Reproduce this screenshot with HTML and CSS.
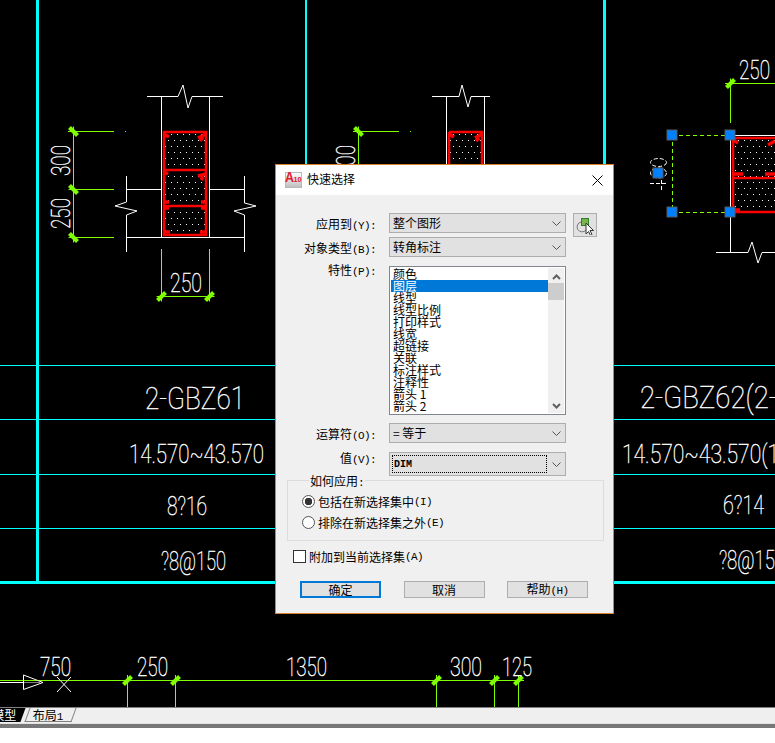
FILE: index.html
```html
<!DOCTYPE html>
<html lang="zh-CN">
<head>
    <meta charset="UTF-8">
    <title>快速选择</title>
    <link rel="stylesheet" href="styles.css">
</head>
<body>
    <div class="cad">
        <svg class="drawing" width="775" height="707" viewBox="0 0 775 707">
            <defs>
                <pattern id="rebar" width="6" height="12" patternUnits="userSpaceOnUse" x="165" y="134">
                    <rect x="0" y="0" width="1" height="1" fill="#fff"/>
                    <rect x="3" y="6" width="1" height="1" fill="#fff"/>
                </pattern>
                <g id="tick-v">
                    <path class="tick" d="M-4 -4L4 4"/>
                    <path class="dim" d="M-5 0H5M0 -5V5"/>
                </g>
                <g id="tick-h">
                    <path class="tick" d="M-4 4L4 -4"/>
                    <path class="dim" d="M-5 0H5M0 -5V5"/>
                </g>
            </defs>

            <!-- table grid -->
            <path class="grid" d="M0 365.5H775M0 419.5H775M0 474.5H775M0 528.5H775"/>
            <path class="grid-mid" d="M306 0V165"/>
            <path class="grid-bold" d="M37.5 0V582M0 582.5H775M604.500 0V165"/>

            <!-- column 1 -->
            <path class="wall" d="M147 96.5H178L183 85L188 108L192 96.5H223M161.5 96V237M209.5 96V237M126 237.5H244"/>
            <path class="wall" d="M126.5 176V202L115 206L137 211L126.5 215V252M244.5 176V203L256 206L234 211L244.5 215V252M126 189.5H161M209 189.5H244"/>
            <rect x="164" y="132" width="42" height="104" fill="url(#rebar)"/>
            <path class="steel" d="M164 132H206V235H164ZM164 170H206M164 206H206"/>
            <path class="steel-bold" d="M164 134L169 137M206 134L198 138M203 137L200 141M164 172L168 174M206 174L198 176M203 177L201 180M165 202L169 202M201 202H206M165 208H169M201 208H206M165 232H170M200 232H206"/>
            <path class="dim" d="M73.5 127V240M68 131.5H114M125 131.5H126M73 189.5H114M73 237.5H114M161.5 249V300M209.5 249V300M157 296.5H214"/>
            <use href="#tick-v" x="73.5" y="131.5"/>
            <use href="#tick-v" x="73.5" y="189.5"/>
            <use href="#tick-v" x="73.5" y="237.5"/>
            <use href="#tick-h" x="161.5" y="296.5"/>
            <use href="#tick-h" x="209.5" y="296.5"/>
            <text class="cad-text" transform="translate(70 176) rotate(-90)" textLength="31" lengthAdjust="spacingAndGlyphs">300</text>
            <text class="cad-text" transform="translate(70 229) rotate(-90)" textLength="31" lengthAdjust="spacingAndGlyphs">250</text>
            <text class="cad-text" x="170" y="292" textLength="32" lengthAdjust="spacingAndGlyphs">250</text>

            <!-- column 2 -->
            <path class="wall" d="M432 96.5H459L462 85L468 107L471 96.5H490M446.5 96V170M484.5 96V170"/>
            <rect x="449" y="132" width="33" height="40" fill="url(#rebar)"/>
            <path class="steel" d="M449 132H482V170M449 132V170"/>
            <path class="steel-bold" d="M449 134L454 137M482 134L475 138M479 138L476 141"/>
            <path class="dim" d="M358.5 127V170M353 131.5H399M410 131.5H411"/>
            <use href="#tick-v" x="358.5" y="131.5"/>
            <text class="cad-text" transform="translate(355 176) rotate(-90)" textLength="31" lengthAdjust="spacingAndGlyphs">300</text>

            <!-- column 3, selected dimension -->
            <path class="wall" d="M730.5 135V252M730 135.5H775M716 252.5H748L752 242L758 263L762 252.5H775"/>
            <rect x="733" y="138" width="42" height="74" fill="url(#rebar)"/>
            <path class="steel" d="M733 138H776M733 138V212H776M733 178H776"/>
            <path class="steel-bold" d="M733 140L738 143M775 141L768 145M733 174H743M765 174H775M733 210H740"/>
            <path class="dim" d="M725 83.5H775M730.5 80V123"/>
            <use href="#tick-h" x="730.5" y="83.5"/>
            <text class="cad-text" x="739" y="79" textLength="31" lengthAdjust="spacingAndGlyphs">250</text>
            <path class="dim-dash" d="M672 135.5H730M672 212.5H730M672.5 135V212"/>
            <g class="ghost">
                <ellipse cx="658.5" cy="162.5" rx="8" ry="4"/>
                <ellipse cx="658.5" cy="173" rx="8" ry="5"/>
                <path d="M650 183.5H668M661.5 180V190"/>
            </g>
            <rect class="grip" x="667" y="130" width="10" height="10"/>
            <rect class="grip" x="725" y="130" width="10" height="10"/>
            <rect class="grip" x="667" y="207" width="10" height="10"/>
            <rect class="grip" x="725" y="207" width="10" height="10"/>
            <rect class="grip" x="653" y="168" width="10" height="10"/>

            <!-- table text -->
            <text class="cad-title" x="145" y="409" textLength="100" lengthAdjust="spacingAndGlyphs">2-GBZ61</text>
            <text class="cad-title" x="640" y="408" textLength="137" lengthAdjust="spacingAndGlyphs">2-GBZ62(2-</text>
            <text class="cad-text" x="129" y="463" textLength="135" lengthAdjust="spacingAndGlyphs">14.570~43.570</text>
            <text class="cad-text" x="622" y="463" textLength="157" lengthAdjust="spacingAndGlyphs">14.570~43.570(1</text>
            <text class="cad-text" x="167" y="515" textLength="40" lengthAdjust="spacingAndGlyphs">8?16</text>
            <text class="cad-text" x="723" y="514" textLength="41" lengthAdjust="spacingAndGlyphs">6?14</text>
            <text class="cad-text" x="161" y="570" textLength="65" lengthAdjust="spacingAndGlyphs">?8@150</text>
            <text class="cad-text" x="719" y="569" textLength="66" lengthAdjust="spacingAndGlyphs">?8@150</text>

            <!-- bottom dimension line -->
            <path class="dim" d="M0 680.5H524M127.5 675V707M175.5 675V707M436.5 675V707M494.5 675V707M518.5 675V707"/>
            <use href="#tick-h" x="127.5" y="680.5"/>
            <use href="#tick-h" x="175.5" y="680.5"/>
            <use href="#tick-h" x="436.5" y="680.5"/>
            <use href="#tick-h" x="494.5" y="680.5"/>
            <use href="#tick-h" x="518.5" y="680.5"/>
            <path class="wall" d="M0 682.5H23M23.5 675V689.5L43 682.5ZM57 692L71 677M57 677L71 692"/>
            <path class="arrow-core" d="M24 682.5H40"/>
            <text class="cad-text" x="40" y="676" textLength="31" lengthAdjust="spacingAndGlyphs">750</text>
            <text class="cad-text" x="137" y="676" textLength="31" lengthAdjust="spacingAndGlyphs">250</text>
            <text class="cad-text" x="286" y="676" textLength="41" lengthAdjust="spacingAndGlyphs">1350</text>
            <text class="cad-text" x="450" y="676" textLength="32" lengthAdjust="spacingAndGlyphs">300</text>
            <text class="cad-text" x="502" y="676" textLength="30" lengthAdjust="spacingAndGlyphs">125</text>
        </svg>
    </div>

    <div class="tabs">
        <div class="tab tab-active"><span>模型</span></div>
        <div class="tab"><span>布局<i class="latin">1</i></span></div>
    </div>
    <div class="hscroll"></div>

    <div class="dialog">
        <div class="titlebar">
            <svg class="app-icon" width="18" height="17" viewBox="0 0 18 17">
                <defs>
                    <linearGradient id="icon-bg" x1="0" y1="0" x2="0" y2="1">
                        <stop offset="0" stop-color="#ffffff"/>
                        <stop offset="1" stop-color="#bdbdbd"/>
                    </linearGradient>
                </defs>
                <rect x="0.5" y="1.5" width="16" height="15" fill="url(#icon-bg)" stroke="#b8b8b8"/>
                <text class="icon-a" x="0" y="11" textLength="9" lengthAdjust="spacingAndGlyphs">A</text>
                <text class="icon-ver" x="8.500" y="11" textLength="8" lengthAdjust="spacingAndGlyphs">10</text>
            </svg>
            <span class="title">快速选择</span>
            <svg class="close" width="11" height="11" viewBox="0 0 11 11">
                <path d="M0.5 0.5L10.5 10.5M10.5 0.5L0.5 10.5"/>
            </svg>
        </div>

        <div class="form">
            <label class="lbl lbl-a">应用到<i class="latin">(Y):</i></label>
            <div class="combo">
                <span>整个图形</span>
                <svg class="chev" width="9" height="5" viewBox="0 0 9 5"><path d="M0.5 0.5L4.5 4.5L8.5 0.5"/></svg>
            </div>
            <button class="pick">
                <svg width="20" height="20" viewBox="0 0 20 20">
                    <path class="pick-arc" d="M6 7A5 5 0 1 0 11 15"/>
                    <rect x="6.5" y="3.5" width="7" height="7" fill="#7db44a" stroke="#2f7d2f"/>
                    <path d="M11 8V19L13.5 16.5L15.5 20.500L17 19.500L15 15.500H18.500Z" fill="#fff" stroke="#333"/>
                </svg>
            </button>

            <label class="lbl lbl-b">对象类型<i class="latin">(B):</i></label>
            <div class="combo">
                <span>转角标注</span>
                <svg class="chev" width="9" height="5" viewBox="0 0 9 5"><path d="M0.5 0.5L4.5 4.5L8.5 0.5"/></svg>
            </div>

            <label class="lbl lbl-c">特性<i class="latin">(P):</i></label>
            <div class="list">
                <ul class="rows">
                    <li>颜色</li>
                    <li class="selected">图层</li>
                    <li>线型</li>
                    <li>线型比例</li>
                    <li>打印样式</li>
                    <li>线宽</li>
                    <li>超链接</li>
                    <li>关联</li>
                    <li>标注样式</li>
                    <li>注释性</li>
                    <li>箭头 1</li>
                    <li>箭头 2</li>
                </ul>
                <div class="vscroll">
                    <svg class="chev-bold" width="9" height="6" viewBox="0 0 9 6"><path d="M1 5L4.500 1.500L8 5"/></svg>
                    <div class="thumb"></div>
                    <svg class="chev-bold chev-down" width="9" height="6" viewBox="0 0 9 6"><path d="M1 1L4.500 4.500L8 1"/></svg>
                </div>
            </div>

            <label class="lbl lbl-d">运算符<i class="latin">(O):</i></label>
            <div class="combo combo-d">
                <span>= 等于</span>
                <svg class="chev" width="9" height="5" viewBox="0 0 9 5"><path d="M0.5 0.5L4.5 4.5L8.5 0.5"/></svg>
            </div>

            <label class="lbl lbl-e">值<i class="latin">(V):</i></label>
            <div class="combo combo-e">
                <span class="focus-box">DIM</span>
                <svg class="chev" width="9" height="5" viewBox="0 0 9 5"><path d="M0.5 0.5L4.5 4.5L8.5 0.5"/></svg>
            </div>
        </div>

        <fieldset class="group">
            <legend>如何应用<i class="latin">:</i></legend>
            <label class="opt"><input type="radio" name="how" checked>包括在新选择集中<i class="latin">(I)</i></label>
            <label class="opt"><input type="radio" name="how">排除在新选择集之外<i class="latin">(E)</i></label>
        </fieldset>

        <label class="append"><input type="checkbox">附加到当前选择集<i class="latin">(A)</i></label>

        <div class="buttons">
            <button class="btn btn-default">确定</button>
            <button class="btn">取消</button>
            <button class="btn">帮助<i class="latin">(H)</i></button>
        </div>
    </div>
</body>
</html>
```

FILE: styles.css
```css
body {
    margin: 0;
    background: #ffffff;
    font-family: "Noto Sans CJK SC", "Liberation Sans", sans-serif;
    font-size: 12px;
    line-height: 12px;
    color: #000000;
    overflow: hidden;
}
.latin {
    font-family: "Liberation Mono", monospace;
    font-size: 11px;
    letter-spacing: -0.6px;
    font-style: normal;
}

/* drawing area */
.cad {
    background: #000000;
    height: 707px;
}
.drawing {
    display: block;
}
.drawing path {
    fill: none;
}
.grid {
    stroke: #00ffff;
    stroke-width: 1;
}
.grid-mid {
    stroke: #00ffff;
    stroke-width: 2;
}
.grid-bold {
    stroke: #00ffff;
    stroke-width: 3;
}
.wall {
    stroke: #ffffff;
    stroke-width: 1;
}
.steel {
    stroke: #ff0000;
    stroke-width: 2.5;
}
.steel-bold {
    stroke: #ff0000;
    stroke-width: 3.5;
}
.dim {
    stroke: #7fff00;
    stroke-width: 1;
}
.tick {
    stroke: #7fff00;
    stroke-width: 4;
}
.dim-dash {
    stroke: #7fff00;
    stroke-width: 1;
    stroke-dasharray: 4 3;
}
.ghost ellipse, .ghost path {
    fill: none;
    stroke: #ffffff;
    stroke-width: 1;
    stroke-dasharray: 4 2;
}
.grip {
    fill: #0080ff;
    stroke: #5a5a5a;
    stroke-width: 1;
}
.arrow-core {
    stroke: #808080;
    stroke-width: 1;
}
.cad-text, .cad-title {
    fill: #ffffff;
    stroke: #ffffff;
    stroke-width: 0.4;
    font-family: Roboto, "Liberation Sans", sans-serif;
    font-weight: 100;
    font-size: 25px;
}
.cad-title {
    font-size: 32px;
}

/* layout tabs */
.tabs {
    display: flex;
    height: 14px;
    padding-bottom: 1px;
    background: #efefef;
    border-top: 1px solid #808080;
    border-bottom: 1px solid #e2e2e2;
    overflow: hidden;
}
.tab {
    width: 45px;
    height: 13px;
    line-height: 13px;
    text-align: center;
    border: 1px solid #808080;
    border-top: 0;
    transform: skewX(-20deg);
}
.tab span {
    display: inline-block;
    margin-left: -4px;
    transform: skewX(20deg);
}
.tab-active {
    width: 31px;
    margin-left: -10px;
    margin-right: 4px;
    background: #000000;
    color: #ffffff;
    text-align: left;
    padding-left: 2px;
    border: 0;
    height: 14px;
}
.tab-active span {
    margin-left: 0;
}
.hscroll {
    height: 4px;
    background: #777777;
}

/* dialog */
.dialog {
    position: absolute;
    left: 275px;
    top: 164px;
    width: 337px;
    height: 448px;
    background: #f0f0f0;
    border: 1px solid #d9802a;
}
.titlebar {
    display: flex;
    align-items: center;
    height: 30px;
    background: #ffffff;
}
.app-icon {
    margin-left: 9px;
    margin-top: -2px;
}
.icon-a {
    fill: #e0202a;
    font-family: "Liberation Sans", sans-serif;
    font-weight: bold;
    font-size: 14px;
}
.icon-ver {
    fill: #e0202a;
    font-family: "Liberation Sans", sans-serif;
    font-weight: bold;
    font-size: 8px;
}
.title {
    margin-left: 4px;
    margin-top: -2px;
}
.close {
    margin-left: auto;
    margin-right: 10px;
}
.close path {
    fill: none;
    stroke: #000000;
    stroke-width: 1;
}

.form {
    display: grid;
    grid-template-columns: 106px 177px 24px;
    column-gap: 7px;
    row-gap: 4px;
    margin-top: 18px;
    align-items: start;
}
.lbl {
    grid-column: 1;
    padding-right: 6px;
    text-align: right;
    white-space: nowrap;
}
.lbl-a { margin-top: 5px; }
.lbl-b { margin-top: 5px; }
.lbl-c { margin-top: 3px; }
.lbl-d { margin-top: 9px; }
.lbl-e { margin-top: 5px; }

.combo {
    display: flex;
    align-items: center;
    justify-content: space-between;
    grid-column: 2;
    box-sizing: border-box;
    height: 20px;
    padding: 0 4px 0 3px;
    background: #e1e1e1;
    border: 1px solid #adadad;
}
.combo-d {
    margin-top: 4px;
}
.combo-e {
    height: 24px;
    margin-top: 5px;
    padding-left: 2px;
}
.chev path {
    fill: none;
    stroke: #555555;
    stroke-width: 1;
}
.focus-box {
    display: block;
    box-sizing: border-box;
    width: 155px;
    height: 18px;
    padding-left: 1px;
    line-height: 17px;
    border: 1px dotted #000000;
    font-family: "Liberation Mono", monospace;
    font-size: 10px;
    font-weight: bold;
}
.pick {
    grid-column: 3;
    grid-row: 1 / span 2;
    box-sizing: border-box;
    width: 24px;
    height: 24px;
    padding: 1px;
    background: #e1e1e1;
    border: 1px solid #adadad;
}
.pick svg {
    display: block;
}
.pick-arc {
    fill: none;
    stroke: #777777;
    stroke-width: 1;
}

.list {
    display: flex;
    grid-column: 2;
    box-sizing: border-box;
    width: 177px;
    height: 149px;
    margin-top: 5px;
    padding: 1px;
    background: #ffffff;
    border: 1px solid #82878f;
    overflow: hidden;
}
.rows {
    flex: 1;
    margin: 0;
    padding: 0;
    list-style: none;
}
.rows li {
    height: 12px;
    line-height: 11px;
    padding-left: 2px;
    overflow: hidden;
}
.rows .selected {
    background: #0078d7;
    color: #ffffff;
}
.vscroll {
    display: flex;
    flex-direction: column;
    align-items: center;
    width: 16px;
    background: #f0f0f0;
}
.chev-bold {
    margin-top: 6px;
}
.chev-bold path {
    fill: none;
    stroke: #606060;
    stroke-width: 2;
}
.thumb {
    width: 16px;
    height: 17px;
    margin-top: 3px;
    background: #cdcdcd;
}
.chev-down {
    margin-top: auto;
    margin-bottom: 4px;
}

.group {
    box-sizing: border-box;
    width: 317px;
    height: 68px;
    margin: -3px 0 0 11px;
    padding: 4px 0 0 14px;
    border: 1px solid #dcdcdc;
}
.group legend {
    margin-left: 7px;
    padding: 0 1px;
    transform: translateY(2px);
}
.opt {
    display: flex;
    align-items: center;
    height: 21px;
}
input[type="radio"] {
    appearance: none;
    box-sizing: border-box;
    width: 13px;
    height: 13px;
    margin: 0 3px 0 0;
    background: #ffffff;
    border: 1px solid #555555;
    border-radius: 50%;
}
input[type="radio"]:checked {
    background: radial-gradient(circle, #333333 0 3.500px, #ffffff 4px);
}
.append {
    display: flex;
    align-items: center;
    height: 13px;
    margin: 9px 0 0 17px;
}
input[type="checkbox"] {
    appearance: none;
    box-sizing: border-box;
    width: 13px;
    height: 13px;
    margin: 0 3px 0 0;
    background: #ffffff;
    border: 1px solid #333333;
}

.buttons {
    display: flex;
    justify-content: space-between;
    width: 288px;
    margin: 18px 0 0 24px;
}
.btn {
    box-sizing: border-box;
    width: 81px;
    height: 17px;
    padding: 0;
    background: #e1e1e1;
    border: 1px solid #adadad;
    font: inherit;
    color: #000000;
}
.btn-default {
    border: 2px solid #0078d7;
}
```
